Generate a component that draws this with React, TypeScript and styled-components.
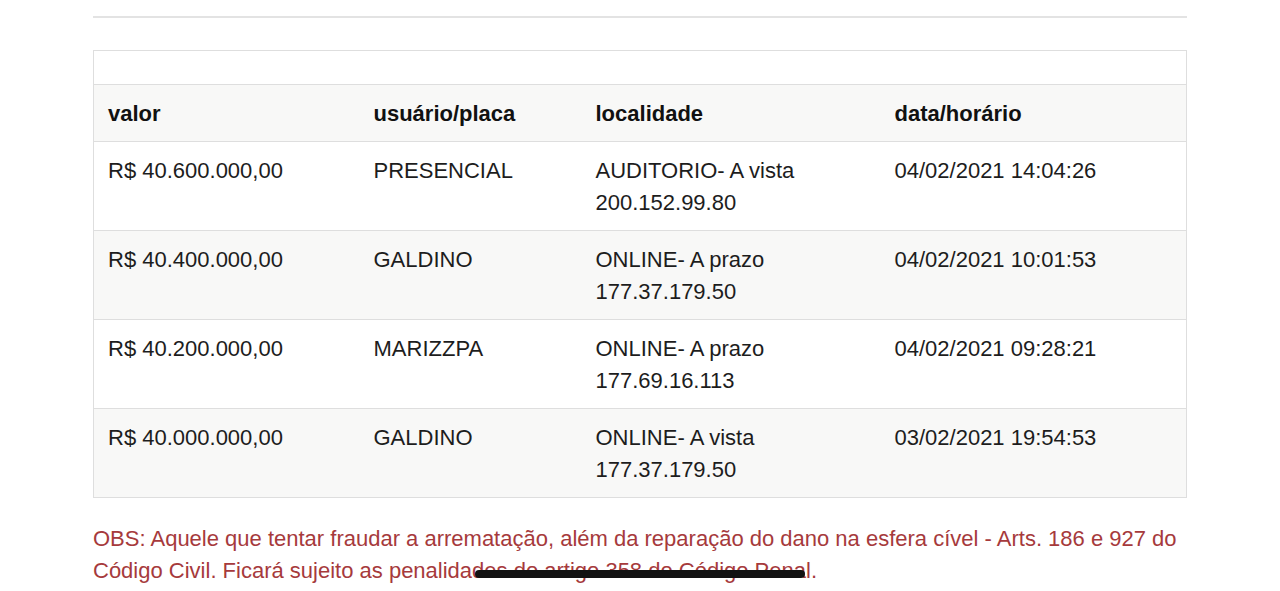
import styled, {createGlobalStyle} from 'styled-components';

interface Lance {
  valor: string;
  usuario: string;
  local: string;
  ip: string;
  data: string;
}

const lances: Lance[] = [
  {valor: 'R$ 40.600.000,00', usuario: 'PRESENCIAL', local: 'AUDITORIO- A vista', ip: '200.152.99.80', data: '04/02/2021 14:04:26'},
  {valor: 'R$ 40.400.000,00', usuario: 'GALDINO', local: 'ONLINE- A prazo', ip: '177.37.179.50', data: '04/02/2021 10:01:53'},
  {valor: 'R$ 40.200.000,00', usuario: 'MARIZZPA', local: 'ONLINE- A prazo', ip: '177.69.16.113', data: '04/02/2021 09:28:21'},
  {valor: 'R$ 40.000.000,00', usuario: 'GALDINO', local: 'ONLINE- A vista', ip: '177.37.179.50', data: '03/02/2021 19:54:53'},
];

const GlobalStyle = createGlobalStyle`
  html, body {
    margin: 0;
    padding: 0;
    background: #fff;
  }
  body {
    font-family: "Liberation Sans", Arial, Helvetica, sans-serif;
    color: #1d1d1d;
  }
`;

const Page = styled.div`
  padding: 16px 93px 0;
`;

const Divider = styled.hr`
  margin: 0 0 32px;
  border: 0;
  border-top: 2px solid #e3e3e3;
`;

const Table = styled.table`
  width: 100%;
  border-collapse: collapse;
  border: 1px solid #dedede;
  table-layout: fixed;
  font-size: 22px;
  line-height: 32px;
`;

const EmptyRow = styled.tr`
  height: 34px;
  border-bottom: 1px solid #dedede;
`;

const Row = styled.tr<{$striped?: boolean}>`
  background: ${({$striped}) => ($striped ? '#f8f8f7' : '#ffffff')};
  border-bottom: 1px solid #dedede;
  &:last-child {
    border-bottom: 0;
  }
`;

const HeadCell = styled.th`
  text-align: left;
  font-weight: 700;
  color: #111;
  padding: 13px 14px 11px;
  vertical-align: top;
`;

const Cell = styled.td`
  padding: 13px 14px 11px;
  vertical-align: top;
  color: #1d1d1d;
`;

const Line = styled.div`
  white-space: nowrap;
`;

const Obs = styled.p`
  margin: 25px 0 0;
  color: #a63a3c;
  font-size: 22px;
  line-height: 32px;
`;

const HomeIndicator = styled.div`
  position: fixed;
  left: 50%;
  bottom: 13px;
  width: 330px;
  height: 8px;
  margin-left: -165px;
  border-radius: 4px;
  background: #121212;
`;

export default function App() {
  return (
    <>
      <GlobalStyle />
      <Page>
        <Divider />
        <Table>
          <colgroup>
            <col style={{width: 266}} />
            <col style={{width: 222}} />
            <col style={{width: 299}} />
            <col />
          </colgroup>
          <tbody>
            <EmptyRow>
              <td colSpan={4} />
            </EmptyRow>
            <Row $striped>
              <HeadCell>valor</HeadCell>
              <HeadCell>usuário/placa</HeadCell>
              <HeadCell>localidade</HeadCell>
              <HeadCell>data/horário</HeadCell>
            </Row>
            {lances.map((lance, index) => (
              <Row key={index} $striped={index % 2 === 1}>
                <Cell>{lance.valor}</Cell>
                <Cell>{lance.usuario}</Cell>
                <Cell>
                  <Line>{lance.local}</Line>
                  <Line>{lance.ip}</Line>
                </Cell>
                <Cell>{lance.data}</Cell>
              </Row>
            ))}
          </tbody>
        </Table>
        <Obs>
          OBS: Aquele que tentar fraudar a arrematação, além da reparação do dano na esfera cível - Arts. 186 e
          927 do Código Civil. Ficará sujeito as penalidades do artigo 358 do Código Penal.
        </Obs>
      </Page>
      <HomeIndicator />
    </>
  );
}
